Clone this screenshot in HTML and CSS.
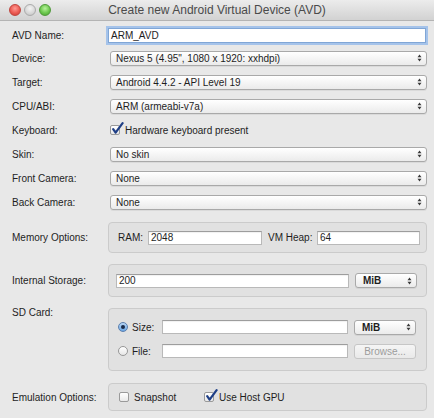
FILE: index.html
```html
<!DOCTYPE html>
<html>
<head>
<meta charset="utf-8">
<link rel="stylesheet" href="styles.css">
</head>
<body>
<div class="window">
  <div class="titlebar">
    <div class="lights">
      <span class="light red"></span><span class="light gray"></span><span class="light green"></span>
    </div>
    <div class="title">Create new Android Virtual Device (AVD)</div>
    <div></div>
  </div>
  <div class="content">
    <div class="row first">
      <span class="lbl">AVD Name:</span>
      <div class="input focus">ARM_AVD</div>
    </div>
    <div class="row">
      <span class="lbl">Device:</span>
      <div class="popup"><span>Nexus 5 (4.95", 1080 x 1920: xxhdpi)</span><svg class="arr" width="5" height="8" viewBox="0 0 5 8"><path d="M0.5 3.3 L2.5 0.6 L4.5 3.3Z M0.5 4.7 L2.5 7.4 L4.5 4.7Z"/></svg></div>
    </div>
    <div class="row">
      <span class="lbl">Target:</span>
      <div class="popup"><span>Android 4.4.2 - API Level 19</span><svg class="arr" width="5" height="8" viewBox="0 0 5 8"><path d="M0.5 3.3 L2.5 0.6 L4.5 3.3Z M0.5 4.7 L2.5 7.4 L4.5 4.7Z"/></svg></div>
    </div>
    <div class="row">
      <span class="lbl">CPU/ABI:</span>
      <div class="popup"><span>ARM (armeabi-v7a)</span><svg class="arr" width="5" height="8" viewBox="0 0 5 8"><path d="M0.5 3.3 L2.5 0.6 L4.5 3.3Z M0.5 4.7 L2.5 7.4 L4.5 4.7Z"/></svg></div>
    </div>
    <div class="row">
      <span class="lbl">Keyboard:</span>
      <div class="check-line kb">
        <span class="cb checked"><svg class="tick" width="13" height="13" viewBox="0 0 13 13"><path d="M2.2 7.2 L4.6 10.6 L11.6 1.2" /></svg></span>
        <span>Hardware keyboard present</span>
      </div>
    </div>
    <div class="row">
      <span class="lbl">Skin:</span>
      <div class="popup"><span>No skin</span><svg class="arr" width="5" height="8" viewBox="0 0 5 8"><path d="M0.5 3.3 L2.5 0.6 L4.5 3.3Z M0.5 4.7 L2.5 7.4 L4.5 4.7Z"/></svg></div>
    </div>
    <div class="row">
      <span class="lbl">Front Camera:</span>
      <div class="popup"><span>None</span><svg class="arr" width="5" height="8" viewBox="0 0 5 8"><path d="M0.5 3.3 L2.5 0.6 L4.5 3.3Z M0.5 4.7 L2.5 7.4 L4.5 4.7Z"/></svg></div>
    </div>
    <div class="row">
      <span class="lbl">Back Camera:</span>
      <div class="popup"><span>None</span><svg class="arr" width="5" height="8" viewBox="0 0 5 8"><path d="M0.5 3.3 L2.5 0.6 L4.5 3.3Z M0.5 4.7 L2.5 7.4 L4.5 4.7Z"/></svg></div>
    </div>

    <div class="grouprow mem">
      <span class="lbl">Memory Options:</span>
      <div class="group g-mem">
        <span class="sublbl ram">RAM:</span>
        <div class="input ram-in">2048</div>
        <span class="sublbl heap">VM Heap:</span>
        <div class="input grow">64</div>
      </div>
    </div>

    <div class="grouprow storage">
      <span class="lbl">Internal Storage:</span>
      <div class="group g-store">
        <div class="input grow">200</div>
        <div class="popup small"><span>MiB</span><svg class="arr" width="5" height="8" viewBox="0 0 5 8"><path d="M0.5 3.3 L2.5 0.6 L4.5 3.3Z M0.5 4.7 L2.5 7.4 L4.5 4.7Z"/></svg></div>
      </div>
    </div>

    <div class="grouprow sd">
      <span class="lbl sd-lbl">SD Card:</span>
      <div class="group g-sd">
        <div class="sd-row">
          <span class="opt"><span class="radio on"></span><span>Size:</span></span>
          <div class="input grow"></div>
          <div class="popup small"><span>MiB</span><svg class="arr" width="5" height="8" viewBox="0 0 5 8"><path d="M0.5 3.3 L2.5 0.6 L4.5 3.3Z M0.5 4.7 L2.5 7.4 L4.5 4.7Z"/></svg></div>
        </div>
        <div class="sd-row">
          <span class="opt"><span class="radio"></span><span>File:</span></span>
          <div class="input grow"></div>
          <div class="button disabled">Browse...</div>
        </div>
      </div>
    </div>

    <div class="grouprow emu">
      <span class="lbl">Emulation Options:</span>
      <div class="group g-emu">
        <span class="check-line snap"><span class="cb"></span><span>Snapshot</span></span>
        <span class="check-line">
          <span class="cb checked"><svg class="tick" width="13" height="13" viewBox="0 0 13 13"><path d="M2.2 7.2 L4.6 10.6 L11.6 1.2" /></svg></span>
          <span>Use Host GPU</span>
        </span>
      </div>
    </div>
  </div>
</div>
</body>
</html>
```
FILE: styles.css
```css
* { box-sizing: border-box; }
html, body { margin: 0; padding: 0; }
body {
  font-family: "Liberation Sans", Arial, sans-serif;
  font-size: 10px;
  color: #1e1e1e;
  background: #e8e8e8;
}
.window {
  width: 434px;
  height: 418px;
  background: #e8e8e8;
  overflow: hidden;
}
.titlebar {
  height: 21px;
  background: linear-gradient(#ececec, #d2d2d2);
  border-bottom: 1px solid #b4b4b4;
  display: grid;
  grid-template-columns: 1fr auto 1fr;
  align-items: center;
}
.lights {
  display: flex;
  gap: 3px;
  padding-left: 9px;
}
.light {
  width: 12px;
  height: 12px;
  border-radius: 50%;
  display: block;
}
.light.red {
  background: radial-gradient(circle at 50% 35%, #ff9a93 0%, #ec5a52 55%, #c93a33 100%);
  border: 1px solid #c0443d;
}
.light.gray {
  background: radial-gradient(circle at 50% 35%, #f4f4f4 0%, #d6d6d6 60%, #bdbdbd 100%);
  border: 1px solid #ababab;
}
.light.green {
  background: radial-gradient(circle at 50% 35%, #b8f29c 0%, #6cc84e 55%, #4a9d32 100%);
  border: 1px solid #4f9a3a;
}
.title {
  font-size: 12px;
  color: #4a4a4a;
  white-space: nowrap;
}
.content {
  padding: 3px 7px 0 12px;
}
.row {
  display: grid;
  grid-template-columns: 96px 1fr;
  align-items: center;
  height: 24px;
}
.row.first { height: 22px; }
.lbl { white-space: nowrap; }

.input {
  height: 14px;
  background: #fff;
  border: 1px solid #b9b9b9;
  border-top-color: #9d9d9d;
  box-shadow: inset 0 1px 1px rgba(0,0,0,0.06);
  padding: 0 2px;
  display: flex;
  align-items: center;
  white-space: nowrap;
}
.input.focus {
  height: 15px;
  margin: 0 1px 0 0;
  border: 1px solid #80a6d6;
  box-shadow: 0 0 0 2px #a5c3ea;
}
.input.grow { flex: 1; }

.popup {
  margin-left: 2px;
  height: 15px;
  display: flex;
  align-items: center;
  justify-content: space-between;
  padding: 0 4px 0 5px;
  border: 1px solid #a9a9a9;
  border-radius: 3px;
  background: linear-gradient(#ffffff, #ebebeb);
  box-shadow: 0 1px 0 rgba(0,0,0,0.06);
  white-space: nowrap;
}
.popup.small {
  width: 62px;
  margin-left: 0;
  padding-left: 7px;
  font-weight: bold;
}
.arr { fill: #3a3a3a; display: block; }

.check-line {
  display: flex;
  align-items: center;
  gap: 5px;
}
.check-line.kb { margin-left: 2px; }
.cb {
  position: relative;
  width: 10px;
  height: 10px;
  border: 1px solid #9a9a9a;
  border-radius: 2px;
  background: linear-gradient(#ffffff, #e9e9e9);
  display: block;
  flex: none;
}
.tick {
  position: absolute;
  left: 0px;
  top: -4px;
  fill: none;
  stroke: #1f3f86;
  stroke-width: 2.2;
  stroke-linecap: round;
  stroke-linejoin: round;
}

.grouprow {
  display: grid;
  grid-template-columns: 96px 1fr;
  align-items: center;
}
.group {
  border: 1px solid #cbcbcb;
  border-radius: 4px;
  background: #e1e1e1;
  display: flex;
  align-items: center;
}
.mem { margin-top: 8px; }
.g-mem {
  height: 31px;
  padding: 0 6px 0 9px;
}
.sublbl { white-space: nowrap; }
.ram { width: 30px; }
.ram-in { width: 114px; }
.heap { width: 49px; margin-left: 6px; }

.storage { margin-top: 11px; }
.g-store {
  height: 33px;
  padding: 0 9px 0 7px;
  gap: 6px;
}

.sd { margin-top: 11px; align-items: start; }
.sd-lbl { margin-top: -1px; }
.g-sd {
  height: 63px;
  flex-direction: column;
  align-items: stretch;
  padding: 6px 10px 7px 9px;
}
.sd-row {
  height: 24px;
  display: flex;
  align-items: center;
  gap: 6px;
}
.opt {
  width: 38px;
  display: flex;
  align-items: center;
  gap: 4px;
}
.radio {
  width: 10px;
  height: 10px;
  border-radius: 50%;
  border: 1px solid #979797;
  background: linear-gradient(#ffffff, #e6e6e6);
  display: flex;
  align-items: center;
  justify-content: center;
  flex: none;
}
.radio.on {
  border-color: #5b7fae;
  background: linear-gradient(#b8d6f5, #6aa6e4);
}
.radio.on::after {
  content: "";
  width: 4px;
  height: 4px;
  border-radius: 50%;
  background: #1b2b48;
}
.button {
  width: 62px;
  height: 15px;
  border: 1px solid #a9a9a9;
  border-radius: 3px;
  background: linear-gradient(#ffffff, #ebebeb);
  display: flex;
  align-items: center;
  justify-content: center;
}
.button.disabled {
  color: #9c9c9c;
  border-color: #c6c6c6;
  background: linear-gradient(#f5f5f5, #e9e9e9);
}

.emu { margin-top: 12px; }
.g-emu {
  height: 28px;
  padding: 0 6px 0 10px;
}
.snap { width: 85px; }
```
